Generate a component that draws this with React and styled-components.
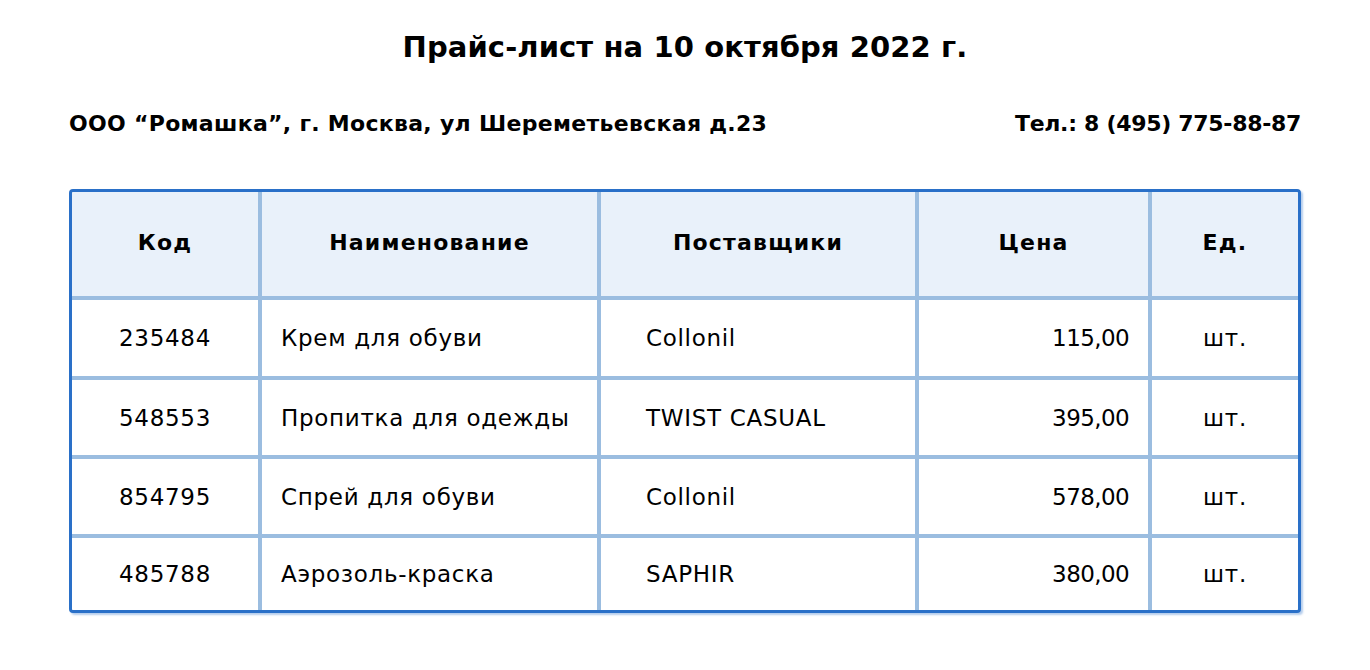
import React from 'react';
import styled, { createGlobalStyle } from 'styled-components';

const GlobalStyle = createGlobalStyle`
    body{
        margin: 0;
        background: #fff;
        font-family: "DejaVu Sans", "Noto Sans", sans-serif;
        color: #000;
    }
`

const rows = [
    { code: '235484', name: 'Крем для обуви', supplier: 'Collonil', price: '115,00', unit: 'шт.' },
    { code: '548553', name: 'Пропитка для одежды', supplier: 'TWIST CASUAL', price: '395,00', unit: 'шт.' },
    { code: '854795', name: 'Спрей для обуви', supplier: 'Collonil', price: '578,00', unit: 'шт.' },
    { code: '485788', name: 'Аэрозоль-краска', supplier: 'SAPHIR', price: '380,00', unit: 'шт.' },
]

function App() {
    return (
        <Page>
            <GlobalStyle/>
            <Title>Прайс-лист на 10 октября 2022 г.</Title>
            <Info>
                <span>ООО “Ромашка”, г. Москва, ул Шереметьевская д.23</span>
                <Phone>Тел.: 8 (495) 775-88-87</Phone>
            </Info>
            <Table>
                <HeadCell>Код</HeadCell>
                <HeadCell>Наименование</HeadCell>
                <HeadCell>Поставщики</HeadCell>
                <HeadCell>Цена</HeadCell>
                <HeadCell>Ед.</HeadCell>
                {
                    rows.map((row) => (
                        <React.Fragment key={row.code}>
                            <Cell align="center">{row.code}</Cell>
                            <Cell align="left" pad={19}>{row.name}</Cell>
                            <Cell align="left" pad={45}>{row.supplier}</Cell>
                            <Cell align="right" pad={19} tight>{row.price}</Cell>
                            <Cell align="center">{row.unit}</Cell>
                        </React.Fragment>
                    ))
                }
            </Table>
        </Page>
    )
}

export default App

const Page = styled.div`
    width: 1370px;
    height: 670px;
    display: flex;
    flex-direction: column;
    align-items: center;
    padding-top: 29px;
    box-sizing: border-box;
`
const Title = styled.h1`
    margin: 0;
    font-size: 29px;
    font-weight: 700;
    line-height: 37px;
    letter-spacing: 0.1px;
`
const Info = styled.div`
    width: 1232px;
    margin-top: 44px;
    display: flex;
    justify-content: space-between;
    font-size: 22px;
    font-weight: 700;
    line-height: 28px;
    letter-spacing: 0.3px;
`
const Phone = styled.span`
    letter-spacing: -0.3px;
`
const Table = styled.div`
    margin-top: 51px;
    width: 1232px;
    box-sizing: border-box;
    display: grid;
    grid-template-columns: 186px 335px 314px 229px 146px;
    grid-template-rows: 104px 76px 75px 75px 72px;
    gap: 4px;
    background: #9bbde0;
    border: 3px solid #2a70c8;
    border-radius: 4px;
    box-shadow: 2px 2px 2px rgba(42, 112, 200, 0.35);
    overflow: hidden;
`
const HeadCell = styled.div`
    background: #e9f1fa;
    display: flex;
    align-items: center;
    justify-content: center;
    padding-bottom: 4px;
    font-size: 22px;
    font-weight: 700;
    letter-spacing: 1.2px;
`
const Cell = styled.div`
    background: #fff;
    display: flex;
    align-items: center;
    justify-content: ${({align}) => align === 'left' ? 'flex-start' : align === 'right' ? 'flex-end' : 'center'};
    padding: 0 ${({pad}) => pad || 0}px;
    font-size: 23px;
    font-weight: 400;
    letter-spacing: ${({tight}) => tight ? '-0.6px' : '0.7px'};
`
